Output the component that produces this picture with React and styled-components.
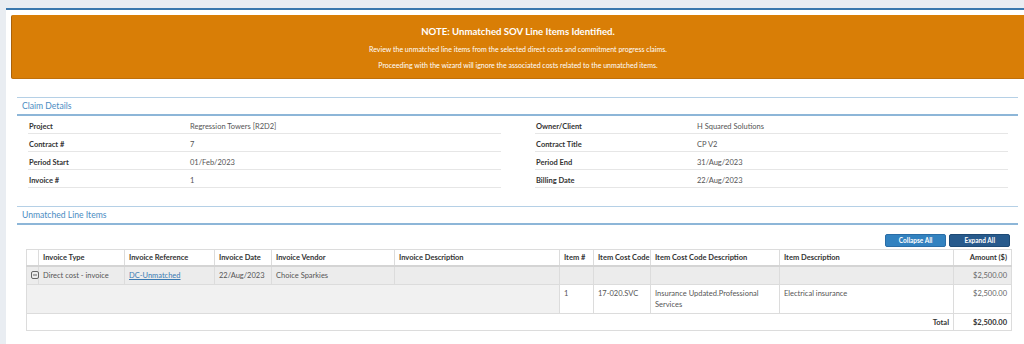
import React from 'react';
import styled, { createGlobalStyle } from 'styled-components';

const GlobalStyle = createGlobalStyle`
  body {
    margin: 0;
    background: #e9edf2;
    font-family: Lato, "Open Sans", sans-serif;
    color: #555;
  }
`;

const claimLeft = [
  ['Project', 'Regression Towers [R2D2]'],
  ['Contract #', '7'],
  ['Period Start', '01/Feb/2023'],
  ['Invoice #', '1'],
];

const claimRight = [
  ['Owner/Client', 'H Squared Solutions'],
  ['Contract Title', 'CP V2'],
  ['Period End', '31/Aug/2023'],
  ['Billing Date', '22/Aug/2023'],
];

const columns = [
  { title: '', width: 12 },
  { title: 'Invoice Type', width: 86 },
  { title: 'Invoice Reference', width: 90 },
  { title: 'Invoice Date', width: 57 },
  { title: 'Invoice Vendor', width: 123 },
  { title: 'Invoice Description', width: 165 },
  { title: 'Item #', width: 34 },
  { title: 'Item Cost Code', width: 57 },
  { title: 'Item Cost Code Description', width: 129 },
  { title: 'Item Description', width: 174 },
  { title: 'Amount ($)', width: 58, right: true },
];

const CollapseIcon = () => (
  <svg width="8" height="8" viewBox="0 0 8 8">
    <rect x="0.5" y="0.5" width="7" height="7" rx="1.5" fill="none" stroke="#666" strokeWidth="1" />
    <line x1="2" y1="4" x2="6" y2="4" stroke="#666" strokeWidth="1" />
  </svg>
);

const App = () => {
  return (
    <>
      <GlobalStyle />
      <Page>
        <Banner>
          <h1>NOTE: Unmatched SOV Line Items Identified.</h1>
          <p>Review the unmatched line items from the selected direct costs and commitment progress claims.</p>
          <p>Proceeding with the wizard will ignore the associated costs related to the unmatched items.</p>
        </Banner>

        <Section>
          <SectionTitle>Claim Details</SectionTitle>
          <DetailsGrid>
            {[claimLeft, claimRight].map((col, ci) => (
              <DetailsColumn key={ci}>
                {col.map(([label, value]) => (
                  <DetailRow key={label}>
                    <Label>{label}</Label>
                    <Value>{value}</Value>
                  </DetailRow>
                ))}
              </DetailsColumn>
            ))}
          </DetailsGrid>
        </Section>

        <Section>
          <SectionTitle>Unmatched Line Items</SectionTitle>
          <Toolbar>
            <ToolButton>Collapse All</ToolButton>
            <ToolButton dark>Expand All</ToolButton>
          </Toolbar>
          <Grid>
            <colgroup>
              {columns.map((c, i) => (
                <col key={i} style={{ width: c.width }} />
              ))}
            </colgroup>
            <thead>
              <tr>
                {columns.map((c, i) => (
                  <Th key={i} right={c.right}>{c.title}</Th>
                ))}
              </tr>
            </thead>
            <tbody>
              <GroupRow>
                <Td><CollapseIcon /></Td>
                <Td>Direct cost - invoice</Td>
                <Td><RefLink href="#">DC-Unmatched</RefLink></Td>
                <Td>22/Aug/2023</Td>
                <Td>Choice Sparkies</Td>
                <Td />
                <Td />
                <Td />
                <Td />
                <Td />
                <Td right muted>$2,500.00</Td>
              </GroupRow>
              <ItemRow>
                <Td colSpan={6} shaded />
                <Td>1</Td>
                <Td>17-020.SVC</Td>
                <Td>Insurance Updated.Professional Services</Td>
                <Td>Electrical insurance</Td>
                <Td right muted>$2,500.00</Td>
              </ItemRow>
              <TotalRow>
                <Td colSpan={10} right strong>Total</Td>
                <Td right strong>$2,500.00</Td>
              </TotalRow>
            </tbody>
          </Grid>
        </Section>
      </Page>
    </>
  );
};

const Page = styled.div`
  margin: 8px 0 0 6px;
  border-top: 2px solid #3b78ad;
  background: #fff;
  min-height: 340px;
  padding: 5px 0 12px 5px;
  box-sizing: border-box;
`;

const Banner = styled.div`
  background: #d97e06;
  border-left: 1px solid #a9620a;
  border-bottom: 1px solid #c0700a;
  border-radius: 2px 0 0 2px;
  height: 64px;
  box-sizing: border-box;
  padding-top: 10px;
  text-align: center;
  color: #fff;

  & h1 {
    margin: 0 0 6px;
    font-size: 9.6px;
    font-weight: 700;
    line-height: 13px;
  }
  & p {
    margin: 0 0 5px;
    font-size: 7px;
    line-height: 11px;
  }
`;

const Section = styled.div`
  margin: 18px 6px 0 6px;
`;

const SectionTitle = styled.div`
  border-top: 1px solid #b5d0e6;
  border-bottom: 2px solid #8db6d8;
  height: 16px;
  line-height: 17px;
  padding-left: 5px;
  font-size: 8.6px;
  color: #4a8cc2;
`;

const DetailsGrid = styled.div`
  display: grid;
  grid-template-columns: 473px 473px;
  column-gap: 34px;
  padding-left: 11px;
`;

const DetailsColumn = styled.div`
  display: flex;
  flex-direction: column;
`;

const DetailRow = styled.div`
  display: grid;
  grid-template-columns: 162px 1fr;
  height: 18px;
  padding-top: 3px;
  box-sizing: border-box;
  align-items: center;
  border-bottom: 1px solid #e6e6e6;
  font-size: 7.5px;
`;

const Label = styled.span`
  padding-left: 1px;
  font-weight: 700;
  color: #333;
`;

const Value = styled.span`
  color: #555;
`;

const Toolbar = styled.div`
  display: flex;
  justify-content: flex-end;
  gap: 3px;
  padding: 9px 8px 2px 0;
`;

const ToolButton = styled.button`
  height: 13px;
  padding: 0 ${(p) => (p.dark ? '14px' : '13px')};
  border: 1px solid ${(p) => (p.dark ? '#1d4a75' : '#2a6da6')};
  border-radius: 2px;
  background: ${(p) => (p.dark ? '#275a8c' : '#3282c0')};
  color: #fff;
  font-family: Lato, sans-serif;
  font-size: 6.5px;
  font-weight: 700;
  line-height: 11px;
`;

const Grid = styled.table`
  margin-left: 9px;
  width: 985px;
  table-layout: fixed;
  border-collapse: collapse;
  border: 1px solid #dcdcdc;
  font-size: 7.5px;
`;

const Th = styled.th`
  height: 15px;
  padding: 0 4px;
  text-align: ${(p) => (p.right ? 'right' : 'left')};
  font-weight: 700;
  color: #333;
  border: 1px solid #dcdcdc;
  border-bottom: 2px solid #d4d4d4;
  white-space: nowrap;
  overflow: hidden;
`;

const Td = styled.td`
  padding: ${(p) => (p.strong ? '0 4px' : '3px 4px 3px')};
  vertical-align: ${(p) => (p.strong ? 'middle' : 'top')};
  text-align: ${(p) => (p.right ? 'right' : 'left')};
  font-weight: ${(p) => (p.strong ? 700 : 400)};
  color: ${(p) => (p.strong ? '#333' : p.muted ? '#666' : '#555')};
  background: ${(p) => (p.shaded ? '#f1f1f1' : 'transparent')};
  border: 1px solid #dcdcdc;
  line-height: 11px;

  & svg {
    display: block;
    margin-top: 1px;
  }
`;

const GroupRow = styled.tr`
  height: 18px;
  background: #ececec;
`;

const ItemRow = styled.tr`
  height: 29px;
`;

const TotalRow = styled.tr`
  height: 17px;
  td {
    border-left: none;
  }
  td:last-child {
    border-left: 1px solid #dcdcdc;
  }
`;

const RefLink = styled.a`
  color: #3a7ab3;
  text-decoration: underline;
`;

export default App;
